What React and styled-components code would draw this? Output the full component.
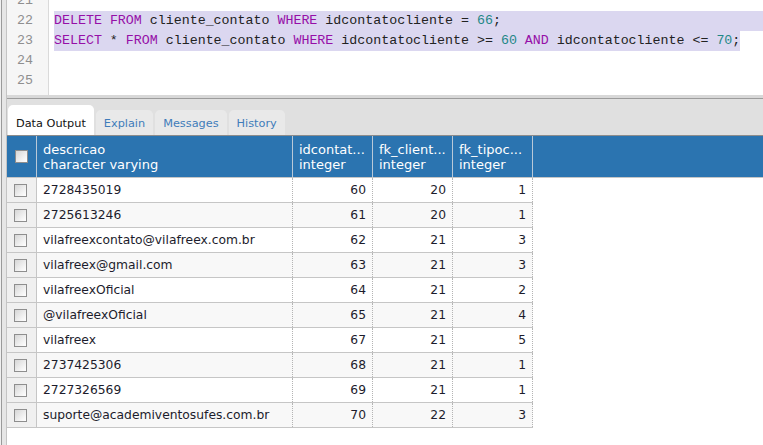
import React from 'react';
import styled, { createGlobalStyle } from 'styled-components';

/* Global */
const GlobalStyle = createGlobalStyle`
  html, body {
    margin: 0;
    padding: 0;
    background: #ffffff;
    overflow: hidden;
  }
`;

const Frame = styled.div`
  display: flex;
  width: 763px;
  height: 445px;
  background: #ffffff;
`;

// left splitter strip that runs down the window
const LeftStrip = styled.div`
  flex: 0 0 7px;
  box-sizing: border-box;
  background: linear-gradient(to right, #f0f0f0 0 1px, #9a9a9a 1px 2px, #e6e6e6 2px 6px, #c4c4c4 6px 7px);
`;

const Main = styled.div`
  flex: 1;
  display: flex;
  flex-direction: column;
  min-width: 0;
`;

/* Editor */
const Editor = styled.div`
  display: flex;
  height: 95px;
  overflow: hidden;
  background: #ffffff;
  font-family: "Liberation Mono", "Courier New", monospace;
  font-size: 13.3px;
`;

const Gutter = styled.div`
  flex: 0 0 41px;
  background: #f6f6f6;
  border-right: 1px solid #dadada;
  color: #8f8f8f;
  text-align: right;
`;

const Lines = styled.div`
  margin-top: -9px;
`;

const LineNo = styled.div`
  height: 20px;
  line-height: 20px;
  padding-right: 15px;
`;

const Code = styled.div`
  flex: 1;
  padding-left: 5px;
  min-width: 0;
`;

const CodeLine = styled.div`
  height: 20px;
  line-height: 20px;
  white-space: pre;
  color: #222222;
`;

const Selected = styled.span`
  display: ${p => (p.$full ? 'block' : 'inline-block')};
  background: #dbd7f0;
  height: 20px;
`;

const Kw = styled.span`
  color: #960fa8;
`;

const Num = styled.span`
  color: #1f8787;
`;

const Splitter = styled.div`
  height: 3px;
  background: #d8d8d8;
  border-bottom: 1px solid #9c9c9c;
`;

/* Results panel */
const TabBar = styled.div`
  display: flex;
  align-items: flex-end;
  gap: 2px;
  height: 36px;
  padding-left: 1px;
  background: #e0e0e0;
  border-bottom: 1px solid #8c8c8c;
  font-family: "DejaVu Sans", Verdana, sans-serif;
  font-size: 11.3px;
`;

const Tab = styled.div`
  height: ${p => (p.$active ? '30px' : '25px')};
  padding: 0 8px 5px;
  display: flex;
  align-items: flex-end;
  box-sizing: border-box;
  border-radius: 5px 5px 0 0;
  background: ${p => (p.$active ? '#ffffff' : '#e9e9e9')};
  color: ${p => (p.$active ? '#111111' : '#3f7cba')};
`;

const HeaderRow = styled.div`
  display: grid;
  grid-template-columns: 30px 256px 80px 80px 80px 1fr;
  height: 41px;
  background: #2b74b0;
  border-bottom: 1px solid #c6c6c6;
  font-family: "DejaVu Sans", Verdana, sans-serif;
  font-size: 13px;
  color: #ffffff;
`;

const HeadCell = styled.div`
  border-right: ${p => (p.$last ? 'none' : '1px solid #b9c9d8')};
  padding: 6px 0 0 6px;
  line-height: 15px;
  white-space: nowrap;
  overflow: hidden;
`;

const HeadBox = styled.div`
  display: flex;
  align-items: center;
  justify-content: center;
  border-right: 1px solid #b9c9d8;
`;

const Box = styled.span`
  display: inline-block;
  width: 11px;
  height: 11px;
  border: 1px solid #8e8e8e;
  background: linear-gradient(135deg, #d6d6d6 0%, #f4f4f4 70%, #ffffff 100%);
`;

const Body = styled.div`
  width: 526px;
  font-family: "DejaVu Sans", Verdana, sans-serif;
  font-size: 12.3px;
  color: #1c1c2c;
`;

const Row = styled.div`
  display: grid;
  grid-template-columns: 30px 256px 80px 80px 80px;
  height: 24px;
  border-bottom: 1px solid #c6c6c6;
  background: ${p => (p.$alt ? '#f8f8f8' : '#ffffff')};
`;

const BoxCell = styled.div`
  display: flex;
  align-items: center;
  justify-content: center;
  padding-right: 2px;
  background: #f0f0f0;
  border-right: 1px solid #c6c6c6;
`;

const Cell = styled.div`
  display: flex;
  align-items: center;
  justify-content: ${p => (p.$num ? 'flex-end' : 'flex-start')};
  padding: ${p => (p.$num ? '0 6px 0 0' : '0 0 0 6px')};
  border-right: 1px dotted #b4b4b4;
  white-space: nowrap;
  overflow: hidden;
`;

const rows = [
  ['2728435019', 60, 20, 1],
  ['2725613246', 61, 20, 1],
  ['vilafreexcontato@vilafreex.com.br', 62, 21, 3],
  ['vilafreex@gmail.com', 63, 21, 3],
  ['vilafreexOficial', 64, 21, 2],
  ['@vilafreexOficial', 65, 21, 4],
  ['vilafreex', 67, 21, 5],
  ['2737425306', 68, 21, 1],
  ['2727326569', 69, 21, 1],
  ['suporte@academiventosufes.com.br', 70, 22, 3],
];

function App() {
  return (
    <Frame>
      <GlobalStyle />
      <LeftStrip />
      <Main>
        <Editor>
          <Gutter>
            <Lines>
              {[21, 22, 23, 24, 25].map(n => (
                <LineNo key={n}>{n}</LineNo>
              ))}
            </Lines>
          </Gutter>
          <Code>
            <Lines>
              <CodeLine />
              <CodeLine>
                <Selected $full>
                  <Kw>DELETE</Kw> <Kw>FROM</Kw> cliente_contato <Kw>WHERE</Kw> idcontatocliente = <Num>66</Num>;
                </Selected>
              </CodeLine>
              <CodeLine>
                <Selected>
                  <Kw>SELECT</Kw> * <Kw>FROM</Kw> cliente_contato <Kw>WHERE</Kw> idcontatocliente &gt;= <Num>60</Num> <Kw>AND</Kw> idcontatocliente &lt;= <Num>70</Num>;
                </Selected>
              </CodeLine>
              <CodeLine />
              <CodeLine />
            </Lines>
          </Code>
        </Editor>
        <Splitter />
        <TabBar>
          <Tab $active>Data Output</Tab>
          <Tab>Explain</Tab>
          <Tab>Messages</Tab>
          <Tab>History</Tab>
        </TabBar>
        <HeaderRow>
          <HeadBox><Box /></HeadBox>
          <HeadCell>descricao<br />character varying</HeadCell>
          <HeadCell>idcontat...<br />integer</HeadCell>
          <HeadCell>fk_client...<br />integer</HeadCell>
          <HeadCell>fk_tipoc...<br />integer</HeadCell>
          <HeadCell $last />
        </HeaderRow>
        <Body>
          {rows.map((r, i) => (
            <Row key={r[1]} $alt={i % 2 === 1}>
              <BoxCell><Box /></BoxCell>
              <Cell>{r[0]}</Cell>
              <Cell $num>{r[1]}</Cell>
              <Cell $num>{r[2]}</Cell>
              <Cell $num>{r[3]}</Cell>
            </Row>
          ))}
        </Body>
      </Main>
    </Frame>
  );
}

export default App;
